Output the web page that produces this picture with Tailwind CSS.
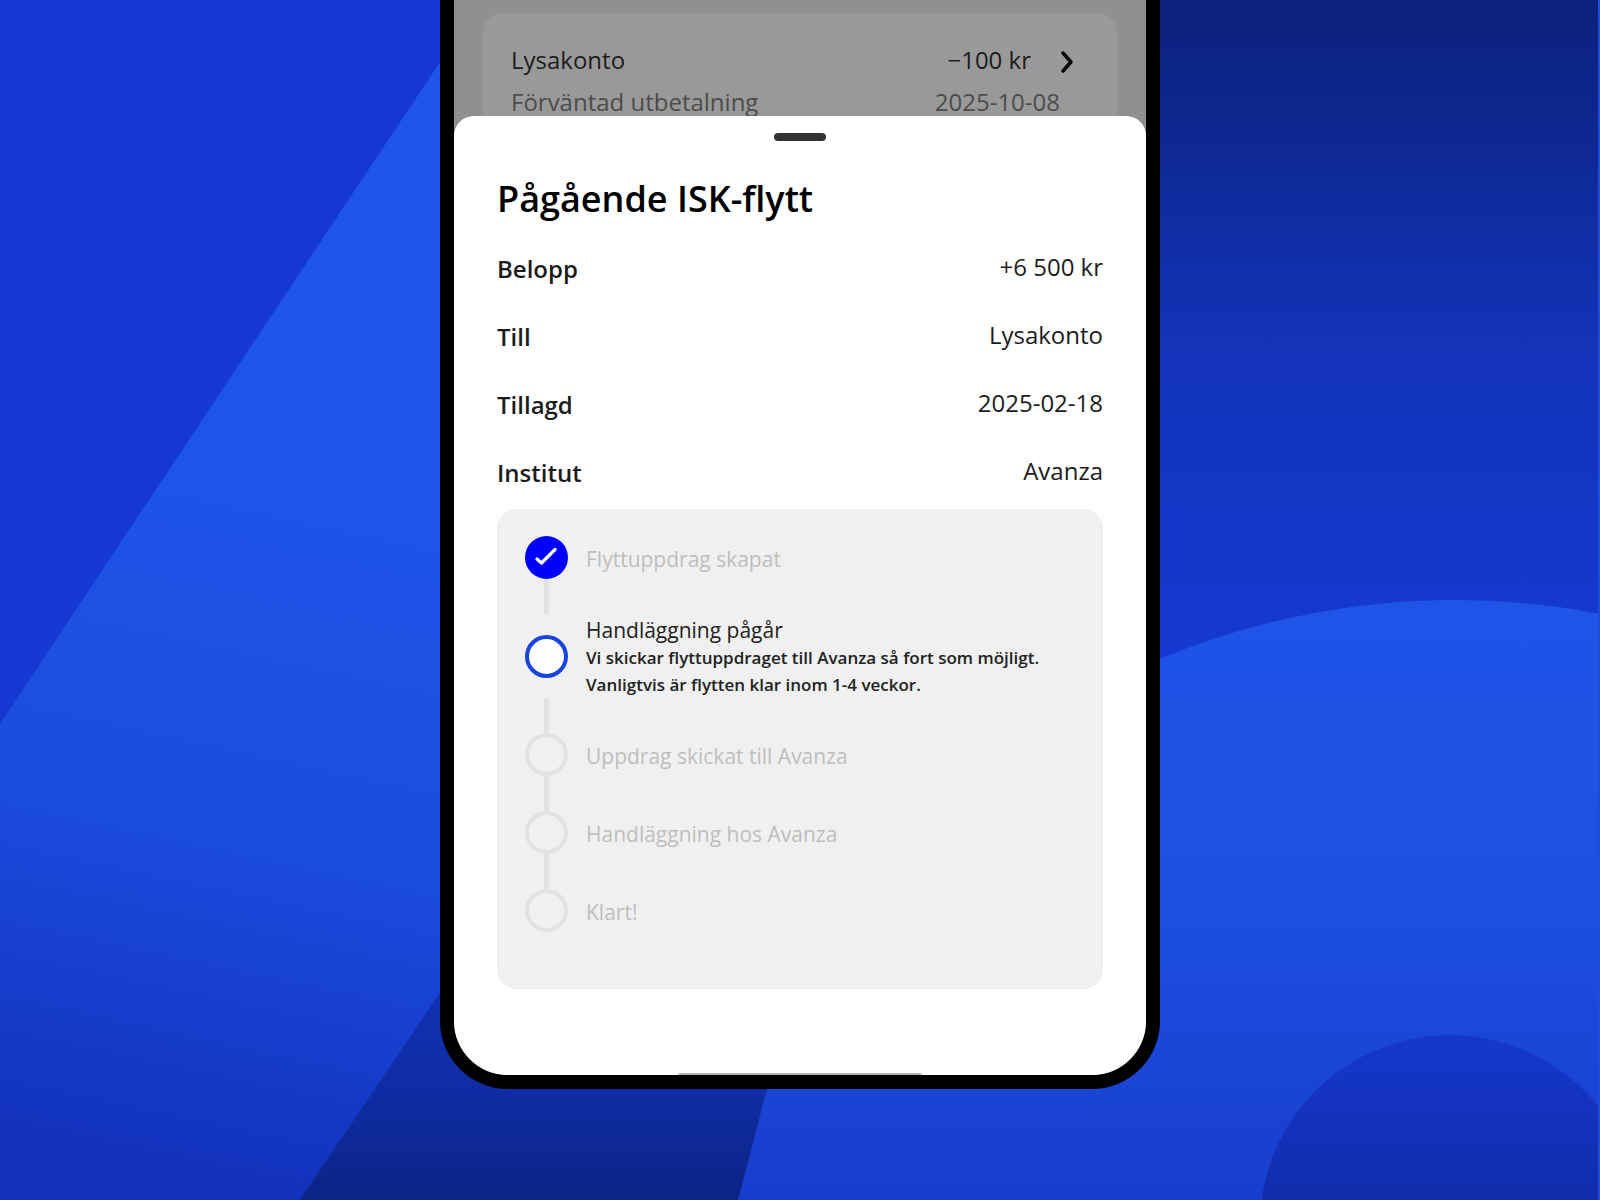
<!DOCTYPE html>
<html lang="sv">
<head>
    <meta charset="UTF-8">
    <meta name="viewport" content="width=device-width, initial-scale=1.0">
    <title>Pågående ISK-flytt</title>
    <script src="https://cdn.jsdelivr.net/npm/@tailwindcss/browser@4"></script>
</head>
<body class="bg-[#1539d4] font-['Open_Sans','Noto_Sans',sans-serif] text-[#1c1c1c]">
    <div class="relative min-h-screen overflow-hidden">
        <!-- Backdrop -->
        <svg class="absolute inset-0 h-full w-full" viewBox="0 0 1600 1200" preserveAspectRatio="none" aria-hidden="true">
            <defs>
                <linearGradient id="band" gradientUnits="userSpaceOnUse" x1="330" y1="500" x2="180" y2="1200">
                    <stop offset="0" stop-color="#1f54e8" />
                    <stop offset="0.5" stop-color="#1b4bde" />
                    <stop offset="0.85" stop-color="#1437c4" />
                    <stop offset="1" stop-color="#1230b8" />
                </linearGradient>
                <linearGradient id="sky" x1="0" y1="0" x2="0" y2="1">
                    <stop offset="0" stop-color="#0b217c" />
                    <stop offset="0.15" stop-color="#0d268c" />
                    <stop offset="0.5" stop-color="#1333b8" />
                    <stop offset="1" stop-color="#1539d4" />
                </linearGradient>
                <linearGradient id="shade" gradientUnits="userSpaceOnUse" x1="0" y1="990" x2="0" y2="1200">
                    <stop offset="0" stop-color="#1231b2" />
                    <stop offset="0.5" stop-color="#102ca4" />
                    <stop offset="1" stop-color="#0b2384" />
                </linearGradient>
                <linearGradient id="hill" gradientUnits="userSpaceOnUse" x1="1350" y1="600" x2="1350" y2="1200">
                    <stop offset="0" stop-color="#1f54e8" />
                    <stop offset="0.5" stop-color="#1d4fe2" />
                    <stop offset="1" stop-color="#173dcc" />
                </linearGradient>
                <linearGradient id="mound" gradientUnits="userSpaceOnUse" x1="0" y1="1035" x2="0" y2="1200">
                    <stop offset="0" stop-color="#1538cc" />
                    <stop offset="1" stop-color="#112cac" />
                </linearGradient>
            </defs>
            <rect width="1600" height="1200" fill="#1538d2" />
            <polygon points="0,724 480,2 800,0 800,1200 0,1200" fill="url(#band)" />
            <polygon points="300,1200 480,933 900,933 900,1200" fill="url(#shade)" />
            <rect x="800" width="800" height="680" fill="url(#sky)" />
            <path d="M738 1200L767 1089C800 900 960 700 1160 659A763 763 0 0 1 1600 614V1200Z" fill="url(#hill)" />
            <circle cx="1450" cy="1225" r="190" fill="url(#mound)" />
            <rect x="1598" width="2" height="1200" fill="#1d4ce0" />
        </svg>

        <!-- Phone -->
        <main class="relative mx-auto max-w-[720px] overflow-hidden rounded-b-[68px] border-x-[14px] border-b-[14px] border-black bg-[#909090]">
            <section class="h-[136px] overflow-hidden px-[29px] pt-[13px]">
                <div class="h-40 rounded-[20px] bg-[#999999] pt-[26px] pr-[42px] pl-7 text-2xl">
                    <div class="flex h-[42px] items-center">
                        <span>Lysakonto</span>
                        <span class="ml-auto">−100 kr</span>
                        <button type="button" aria-label="Visa Lysakonto" class="ml-7 pt-[3px]">
                            <svg class="h-6 w-4" viewBox="0 0 16 24" fill="none" stroke="black" stroke-width="3.4" stroke-linecap="round" stroke-linejoin="round">
                                <path d="M4 3L12 12L4 21" />
                            </svg>
                        </button>
                    </div>
                    <div class="flex h-[42px] items-center justify-between pr-[15px] text-[#4c4c4c]">
                        <span>Förväntad utbetalning</span>
                        <span>2025-10-08</span>
                    </div>
                </div>
            </section>

            <!-- Bottom sheet -->
            <section class="relative -mt-5 rounded-t-[20px] bg-white px-[43px] pt-[17px] pb-[86px]">
                <div class="mx-auto h-2 w-[52px] rounded-full bg-[#333333]"></div>
                <h1 class="mt-[38px] text-4xl leading-10 font-semibold text-black">Pågående ISK-flytt</h1>

                <dl class="mt-4 pb-[2px] text-2xl">
                    <div class="flex h-17 items-center justify-between">
                        <dt class="font-semibold">Belopp</dt>
                        <dd class="pb-1">+6 500 kr</dd>
                    </div>
                    <div class="flex h-17 items-center justify-between">
                        <dt class="font-semibold">Till</dt>
                        <dd class="pb-1">Lysakonto</dd>
                    </div>
                    <div class="flex h-17 items-center justify-between">
                        <dt class="font-semibold">Tillagd</dt>
                        <dd class="pb-1">2025-02-18</dd>
                    </div>
                    <div class="flex h-17 items-center justify-between">
                        <dt class="font-semibold">Institut</dt>
                        <dd class="pb-1">Avanza</dd>
                    </div>
                </dl>

                <!-- Steps -->
                <ol class="rounded-[20px] bg-[#f0f0f0] px-7 pt-[27px] pb-[57px] text-[21px] font-medium text-[#bebebe]">
                    <li>
                        <div class="flex items-center gap-[18px]">
                            <span class="flex size-[43px] shrink-0 items-center justify-center rounded-full bg-[#0000ff]">
                                <svg class="size-6" viewBox="0 0 24 24" fill="none" stroke="white" stroke-width="3.2" stroke-linecap="round" stroke-linejoin="round">
                                    <path d="M2 13L6.500 17L20 3.500" />
                                </svg>
                            </span>
                            <span class="pt-1">Flyttuppdrag skapat</span>
                        </div>
                        <div class="ml-[19px] h-9 w-[5px] rounded-b-full bg-[#e2e2e2]"></div>
                    </li>
                    <li>
                        <div class="flex h-[83px] items-center gap-[18px]">
                            <span class="size-[43px] shrink-0 rounded-full border-4 border-[#1a44e0] bg-white"></span>
                            <div class="text-[#222222]">
                                <p class="leading-7">Handläggning pågår</p>
                                <p class="text-[17px] leading-[27px] font-semibold">Vi skickar flyttuppdraget till Avanza så fort som möjligt. Vanligtvis är flytten klar inom 1-4 veckor.</p>
                            </div>
                        </div>
                        <div class="ml-[19px] h-[35px] w-[5px] rounded-t-full bg-[#e2e2e2]"></div>
                    </li>
                    <li>
                        <div class="flex items-center gap-[18px]">
                            <span class="size-[43px] shrink-0 rounded-full border-4 border-[#e2e2e2]"></span>
                            <span class="pt-1">Uppdrag skickat till Avanza</span>
                        </div>
                        <div class="ml-[19px] h-[35px] w-[5px] bg-[#e2e2e2]"></div>
                    </li>
                    <li>
                        <div class="flex items-center gap-[18px]">
                            <span class="size-[43px] shrink-0 rounded-full border-4 border-[#e2e2e2]"></span>
                            <span class="pt-1">Handläggning hos Avanza</span>
                        </div>
                        <div class="ml-[19px] h-[35px] w-[5px] bg-[#e2e2e2]"></div>
                    </li>
                    <li class="flex items-center gap-[18px]">
                        <span class="size-[43px] shrink-0 rounded-full border-4 border-[#e2e2e2]"></span>
                        <span class="pt-1">Klart!</span>
                    </li>
                </ol>
            </section>
            <div class="absolute bottom-0 left-1/2 h-[2px] w-[244px] -translate-x-1/2 rounded-t-full bg-[#b0b0b0]"></div>
        </main>
    </div>
</body>
</html>
